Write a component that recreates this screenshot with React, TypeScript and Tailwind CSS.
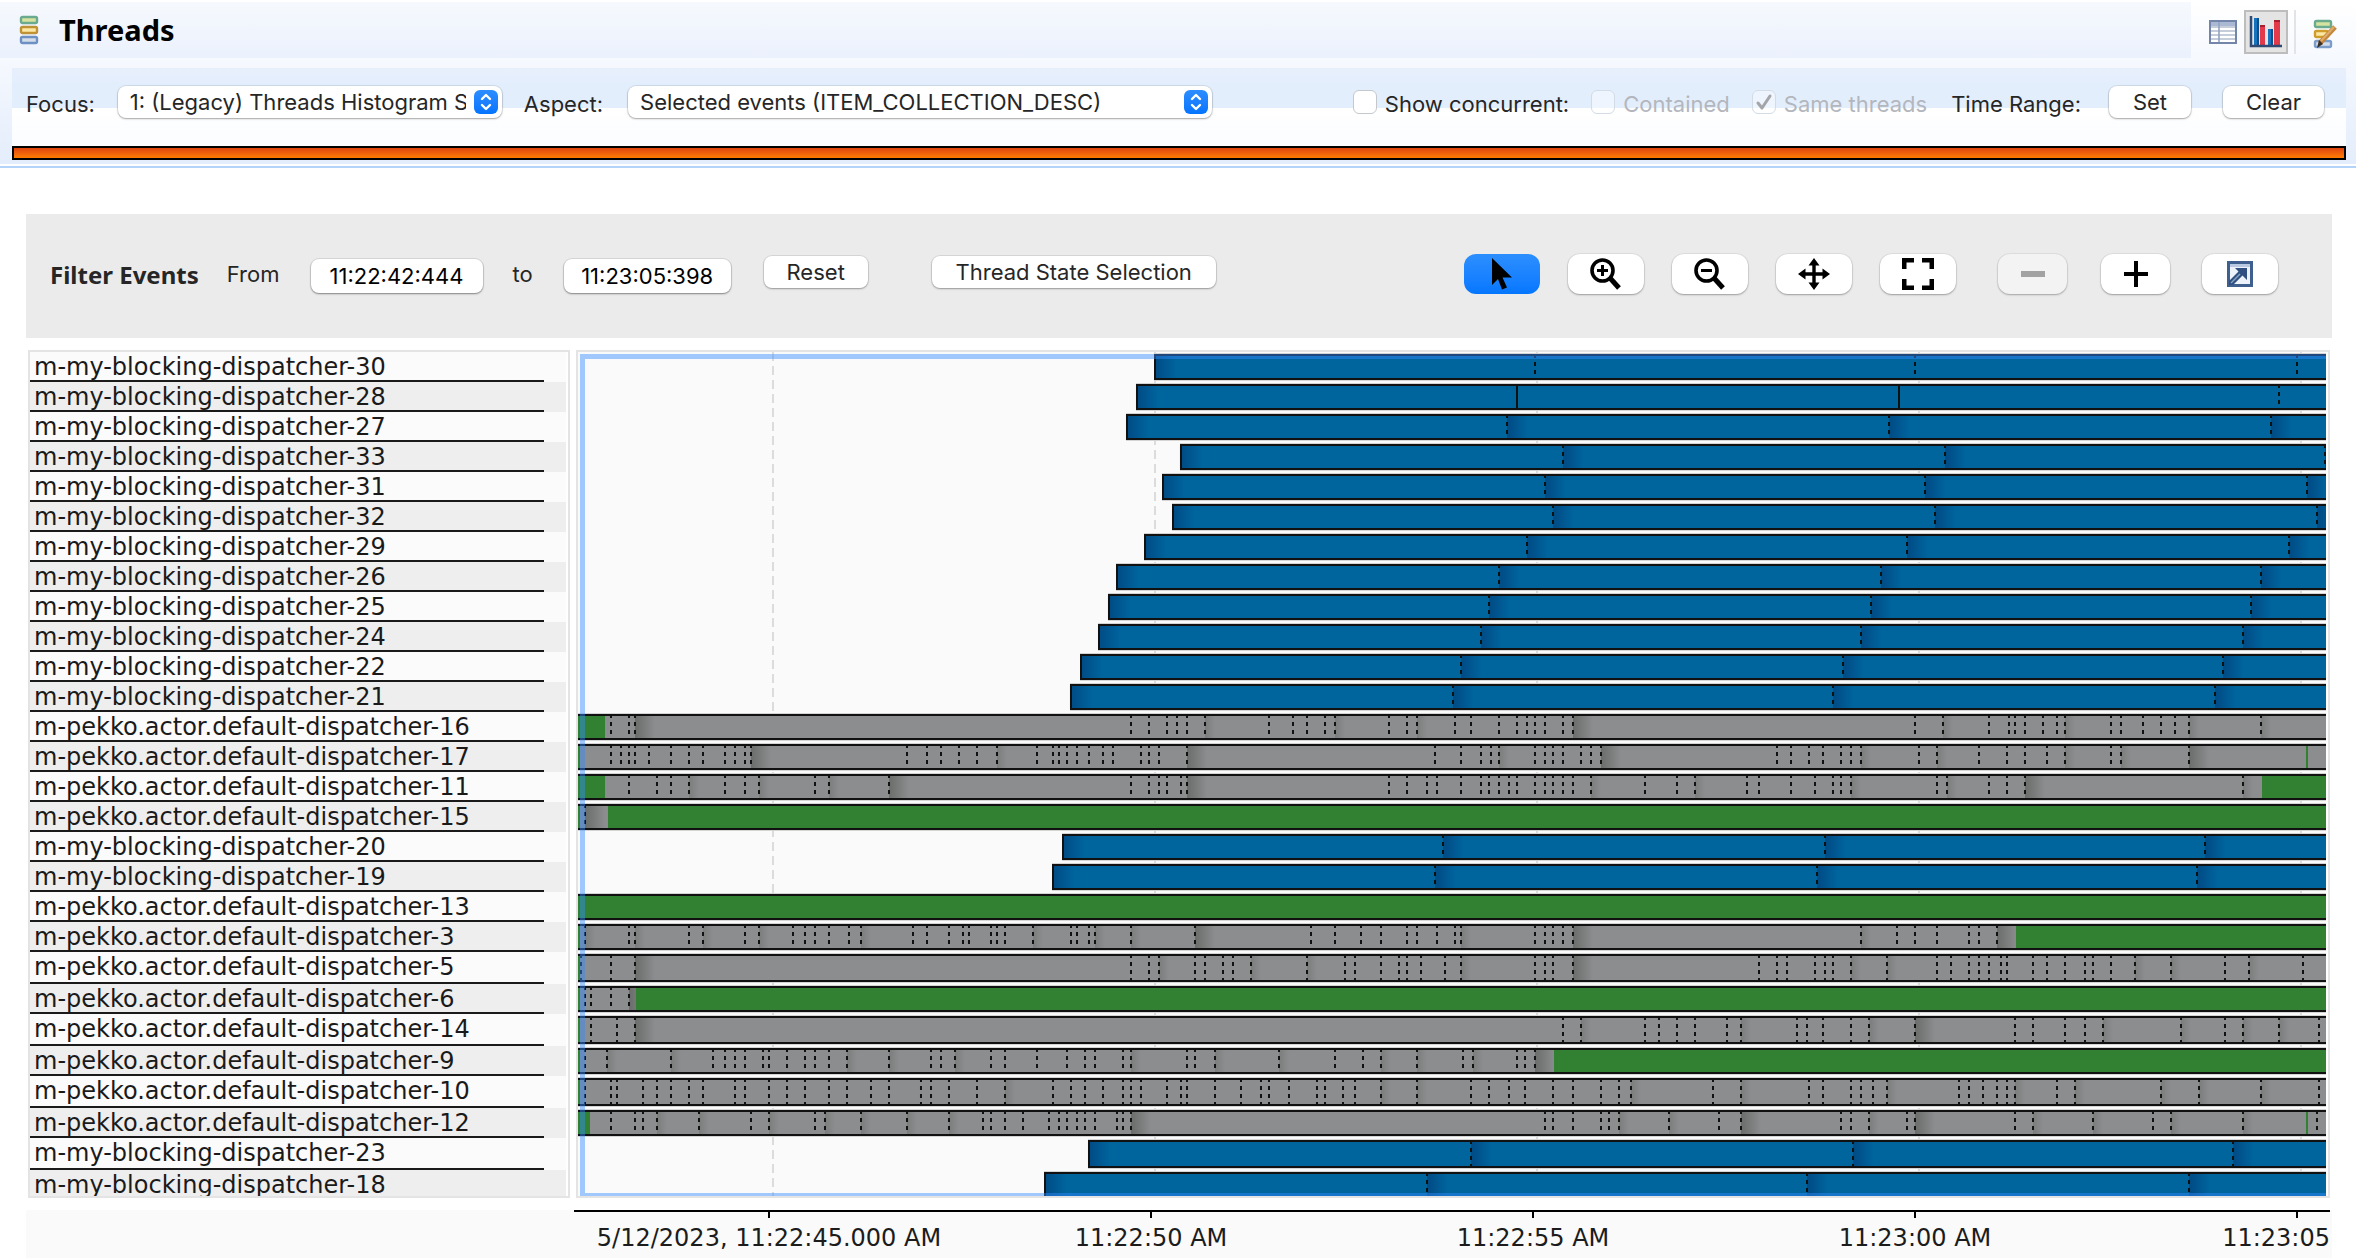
import React from "react";

type Kind = "blue" | "grey" | "green";

interface Thread {
  name: string;
  kind: Kind;
  start?: number;
  ticks?: number[];
  /** green stretches as [from, to] */
  green?: [number, number][];
  solidTicks?: boolean;
}

const SPAN = 1748;
const B = "m-my-blocking-dispatcher-";
const P = "m-pekko.actor.default-dispatcher-";

const THREADS: Thread[] = [
  { name: B + "30", kind: "blue", start: 576, ticks: [957, 1337, 1719] },
  { name: B + "28", kind: "blue", start: 558, ticks: [939, 1321, 1701], solidTicks: true },
  { name: B + "27", kind: "blue", start: 548, ticks: [929, 1311, 1693] },
  { name: B + "33", kind: "blue", start: 602, ticks: [985, 1367, 1747] },
  { name: B + "31", kind: "blue", start: 584, ticks: [967, 1347, 1729] },
  { name: B + "32", kind: "blue", start: 594, ticks: [975, 1357, 1739] },
  { name: B + "29", kind: "blue", start: 566, ticks: [949, 1329, 1711] },
  { name: B + "26", kind: "blue", start: 538, ticks: [921, 1303, 1683] },
  { name: B + "25", kind: "blue", start: 530, ticks: [911, 1293, 1673] },
  { name: B + "24", kind: "blue", start: 520, ticks: [903, 1283, 1665] },
  { name: B + "22", kind: "blue", start: 502, ticks: [883, 1265, 1645] },
  { name: B + "21", kind: "blue", start: 492, ticks: [875, 1255, 1637] },
  {
    name: P + "16",
    kind: "grey",
    green: [[0, 27]],
    ticks: [33, 51, 57, 553, 571, 589, 599, 609, 627, 691, 715, 729, 747, 757, 811, 829, 839, 877, 893, 921, 939, 949, 957, 967, 985, 995, 1337, 1365, 1411, 1431, 1437, 1447, 1465, 1479, 1487, 1533, 1543, 1565, 1583, 1597, 1611, 1683],
  },
  {
    name: P + "17",
    kind: "grey",
    green: [[0, 2], [1728, 1730]],
    ticks: [33, 43, 51, 57, 71, 93, 111, 125, 147, 157, 167, 173, 329, 349, 363, 381, 399, 419, 459, 475, 481, 489, 499, 511, 525, 535, 563, 571, 581, 609, 857, 883, 903, 913, 921, 957, 967, 975, 985, 1003, 1013, 1023, 1199, 1213, 1231, 1245, 1263, 1273, 1283, 1341, 1359, 1401, 1429, 1447, 1469, 1487, 1533, 1543, 1611],
  },
  {
    name: P + "11",
    kind: "grey",
    green: [[0, 27], [1684, 1748]],
    ticks: [51, 79, 93, 111, 147, 167, 181, 237, 251, 311, 553, 571, 581, 589, 603, 609, 811, 829, 849, 859, 883, 903, 911, 921, 931, 939, 957, 967, 975, 985, 995, 1013, 1067, 1099, 1117, 1169, 1181, 1213, 1237, 1255, 1263, 1273, 1359, 1369, 1411, 1429, 1447, 1665],
  },
  { name: P + "15", kind: "grey", green: [[0, 2], [30, 1748]], ticks: [7] },
  { name: B + "20", kind: "blue", start: 484, ticks: [865, 1247, 1627] },
  { name: B + "19", kind: "blue", start: 474, ticks: [857, 1239, 1619] },
  { name: P + "13", kind: "green" },
  {
    name: P + "3",
    kind: "grey",
    green: [[0, 2], [1438, 1748]],
    ticks: [7, 51, 57, 111, 125, 167, 181, 215, 227, 237, 251, 271, 283, 335, 349, 371, 385, 391, 413, 419, 427, 455, 493, 499, 511, 517, 553, 617, 733, 757, 783, 803, 829, 839, 859, 877, 883, 957, 967, 975, 985, 995, 1283, 1319, 1337, 1359, 1391, 1401, 1419],
  },
  {
    name: P + "5",
    kind: "grey",
    green: [[0, 2]],
    ticks: [3, 33, 57, 553, 571, 581, 617, 627, 645, 655, 673, 729, 767, 777, 803, 821, 829, 843, 867, 883, 957, 967, 975, 995, 1181, 1199, 1209, 1237, 1247, 1255, 1273, 1309, 1359, 1373, 1391, 1401, 1411, 1423, 1429, 1455, 1469, 1487, 1507, 1515, 1533, 1557, 1593, 1647, 1671, 1725],
  },
  { name: P + "6", kind: "grey", green: [[0, 2], [58, 1748]], ticks: [7, 13, 33, 51] },
  {
    name: P + "14",
    kind: "grey",
    green: [[0, 2]],
    ticks: [13, 39, 57, 985, 1003, 1067, 1081, 1099, 1117, 1149, 1163, 1219, 1229, 1245, 1273, 1291, 1337, 1437, 1455, 1487, 1507, 1525, 1603, 1647, 1665, 1701, 1741],
  },
  {
    name: P + "9",
    kind: "grey",
    green: [[0, 2], [976, 1748]],
    ticks: [7, 29, 93, 135, 147, 157, 167, 185, 191, 209, 227, 237, 251, 269, 311, 353, 363, 377, 413, 427, 459, 489, 507, 517, 545, 553, 609, 617, 637, 701, 757, 785, 803, 839, 885, 895, 939, 947, 957],
  },
  {
    name: P + "10",
    kind: "grey",
    green: [[0, 2]],
    ticks: [7, 33, 39, 65, 79, 93, 111, 125, 157, 167, 191, 209, 227, 251, 269, 293, 311, 343, 353, 371, 399, 427, 475, 493, 507, 525, 545, 553, 563, 589, 603, 609, 637, 663, 683, 691, 711, 739, 747, 765, 777, 803, 839, 893, 911, 931, 947, 975, 995, 1023, 1041, 1053, 1135, 1163, 1231, 1245, 1273, 1283, 1295, 1309, 1381, 1391, 1405, 1419, 1429, 1437, 1479, 1497, 1583, 1621, 1683, 1741],
  },
  {
    name: P + "12",
    kind: "grey",
    green: [[0, 12], [1728, 1730]],
    ticks: [33, 57, 65, 79, 121, 173, 191, 237, 247, 283, 329, 371, 405, 413, 427, 445, 471, 481, 489, 499, 507, 517, 539, 545, 553, 967, 975, 995, 1023, 1031, 1041, 1091, 1141, 1163, 1263, 1273, 1291, 1329, 1337, 1437, 1455, 1515, 1575, 1593, 1665, 1739],
  },
  { name: B + "23", kind: "blue", start: 510, ticks: [893, 1275, 1655] },
  { name: B + "18", kind: "blue", start: 466, ticks: [849, 1229, 1611] },
];

const TALL_ROWS = [20, 22, 24, 26, 27];
const rowHeight = (i: number) => (TALL_ROWS.includes(i) ? 32 : 30);
const ROW_TOPS = THREADS.map((_, i) =>
  THREADS.slice(0, i).reduce((sum, _t, j) => sum + rowHeight(j), 0)
);

const GRID_LINES = [195, 577, 959, 1341, 1723];
const FILL: Record<Kind, string> = { blue: "#00649d", grey: "#8c8d8f", green: "#328132" };
const pct = (v: number) => `${((v / SPAN) * 100).toFixed(3)}%`;

function Bar({ thread, index }: { thread: Thread; index: number }) {
  const y = ROW_TOPS[index] + 2;
  const h = rowHeight(index) - 4;
  const x = thread.start ?? 0;
  const ticks = thread.ticks ?? [];
  const isBlue = thread.kind === "blue";
  return (
    <g>
      <rect x={pct(x)} y={y - 1} width={pct(SPAN - x)} height={h + 2} fill="#d4d4d4" />
      <rect x={pct(x)} y={y} width={pct(SPAN - x)} height={h} fill="#111" />
      <rect x={pct(x)} y={y + 2} width={pct(SPAN - x)} height={h - 4} fill={FILL[thread.kind]} />
      {isBlue && <rect x={pct(x)} y={y + 2} width="22" height={h - 4} fill="url(#shade-blue)" />}
      {isBlue && <rect x={pct(x)} y={y} width="2" height={h} fill="#111" />}
      {isBlue &&
        index > 1 &&
        ticks.map((t) => (
          <rect key={t} x={pct(t)} y={y + 2} width="20" height={h - 4} fill="url(#shade-blue)" />
        ))}
      {thread.kind === "grey" &&
        ticks.map((t, k) => {
          const gap = (ticks[k + 1] ?? SPAN) - t;
          return gap >= 34 ? (
            <rect
              key={t}
              x={pct(t)}
              y={y + 2}
              width={gap > 90 ? 20 : 10}
              height={h - 4}
              fill="url(#shade-grey)"
              opacity={gap > 90 ? 1 : 0.5}
            />
          ) : null;
        })}
      {(thread.green ?? []).map(([a, b]) => (
        <rect key={a} x={pct(a)} y={y + 2} width={pct(b - a)} height={h - 4} fill={FILL.green} />
      ))}
      {ticks.map((t, k) => (
        <line
          key={t}
          x1={pct(t)}
          x2={pct(t)}
          y1={y}
          y2={y + h}
          stroke="#111"
          strokeWidth="2"
          strokeDasharray={thread.solidTicks && k < 2 ? undefined : "4 4"}
        />
      ))}
    </g>
  );
}

function ThreadChart() {
  return (
    <svg className="block h-[844px] w-full bg-[#fafafa]" role="img" aria-label="Thread timeline">
      <defs>
        <linearGradient id="shade-blue">
          <stop offset="0" stopColor="#004a84" />
          <stop offset="1" stopColor="#00649d" />
        </linearGradient>
        <linearGradient id="shade-grey">
          <stop offset="0" stopColor="#6a6d6a" />
          <stop offset="1" stopColor="#8c8d8f" />
        </linearGradient>
      </defs>
      {GRID_LINES.map((x) => (
        <line key={x} x1={pct(x)} x2={pct(x)} y1="0" y2="844" stroke="#dcdcdc" strokeWidth="2" strokeDasharray="9 5" />
      ))}
      {THREADS.map((t, i) => (
        <Bar key={t.name} thread={t} index={i} />
      ))}
      <g fill="#338cff" fillOpacity="0.45">
        <rect x="2" y="2" width="5" height="842" />
        <rect x="7" y="2" width="100%" height="5" />
        <rect x="7" y="841" width="100%" height="3" />
      </g>
    </svg>
  );
}

const AXIS_SPAN = 1756;
const AXIS: [number, string][] = [
  [195, "5/12/2023, 11:22:45.000 AM"],
  [577, "11:22:50 AM"],
  [959, "11:22:55 AM"],
  [1341, "11:23:00 AM"],
];

function TimeAxis() {
  const p = (v: number) => `${((v / AXIS_SPAN) * 100).toFixed(3)}%`;
  return (
    <svg className="block h-12 w-full" role="img" aria-label="Time axis">
      <rect width="100%" height="2" fill="#000" />
      {[...AXIS.map(([x]) => x), 1723].map((x) => (
        <line key={x} x1={p(x)} x2={p(x)} y1="2" y2="8" stroke="#000" strokeWidth="2" />
      ))}
      <g fontFamily="'DejaVu Sans', sans-serif" fontSize="24" fill="#1c1c1c">
        {AXIS.map(([x, label]) => (
          <text key={x} x={p(x)} y="36" textAnchor="middle">
            {label}
          </text>
        ))}
        <text x="100%" y="36" textAnchor="end">
          11:23:05
        </text>
      </g>
    </svg>
  );
}

function StackIcon() {
  return (
    <svg width="20" height="30" viewBox="0 0 20 30">
      <rect x="2" y="2" width="16" height="6" rx="1.5" fill="#d6e3a0" stroke="#6aab90" strokeWidth="2.4" />
      <rect x="2" y="12" width="16" height="6" rx="1.5" fill="#fbe8a4" stroke="#bf9235" strokeWidth="2.4" />
      <rect x="2" y="22" width="16" height="6" rx="1.5" fill="#d3deea" stroke="#6c91c2" strokeWidth="2.4" />
    </svg>
  );
}

function TableIcon() {
  return (
    <svg width="28" height="24" viewBox="0 0 28 24">
      <rect x="1" y="1" width="26" height="22" fill="#fff" stroke="#7385a8" strokeWidth="2" />
      <rect x="2" y="2" width="24" height="4" fill="#aab8d4" />
      <path d="M2 7h24M2 11h24M2 15h24M2 19h24" stroke="#b3bdd0" strokeWidth="1.6" />
      <path d="M10 2v20" stroke="#93a2c0" strokeWidth="1.6" />
    </svg>
  );
}

function ChartIcon() {
  return (
    <svg width="34" height="34" viewBox="0 0 34 34">
      <path d="M5 3h5v27H5zM19 14h5v16h-5z" fill="#1673bd" />
      <path d="M8 3h2v27H8zM22 14h2v16h-2z" fill="#0b4f8a" />
      <path d="M11 10h5v20h-5zM25 5h6v25h-6z" fill="#e2394b" />
      <path d="M11 10h5v2h-5zM25 5h6v2h-6z" fill="#a81f30" />
      <path d="M2 1v30h31" fill="none" stroke="#2f4a73" strokeWidth="2.5" />
    </svg>
  );
}

function StackPencilIcon() {
  return (
    <svg width="26" height="32" viewBox="0 0 26 32">
      <rect x="3" y="3" width="16" height="6" rx="1.5" fill="#d6e3a0" stroke="#6aab90" strokeWidth="2.4" />
      <rect x="3" y="13" width="13" height="6" rx="1.5" fill="#fbe8a4" stroke="#d09c2c" strokeWidth="2.4" />
      <rect x="3" y="23" width="16" height="6" rx="1.5" fill="#d3deea" stroke="#7c9dca" strokeWidth="2.4" />
      <path d="M23 9 8 25" stroke="#c4853d" strokeWidth="5" />
      <path d="M22 9 9 23" stroke="#e0ac68" strokeWidth="2" />
      <path d="m7 22 4 4-6 4z" fill="#3a2f26" />
    </svg>
  );
}

const CursorIcon = () => (
  <svg width="22" height="32" viewBox="0 0 22 32">
    <path d="M1 0v27l6-6 4 10.500 5-2-4.500-10H21z" fill="#000" />
  </svg>
);

const ZoomIcon = ({ plus }: { plus?: boolean }) => (
  <svg width="32" height="32" viewBox="0 0 32 32" fill="none" stroke="#000">
    <circle cx="12.500" cy="12.500" r="10.500" strokeWidth="3.600" />
    <path d="m20 20 9 10" strokeWidth="5" />
    <path d={plus ? "M7 12.500h11M12.500 7v11" : "M7 12.500h11"} strokeWidth="3" />
  </svg>
);

const MoveIcon = () => (
  <svg width="32" height="32" viewBox="0 0 32 32">
    <path d="M16 4v24M4 16h24" stroke="#000" strokeWidth="3.400" />
    <path d="m16 0 5.500 7.500h-11zM16 32l5.500-7.500h-11zM0 16l7.500-5.500v11zM32 16l-7.500-5.500v11z" fill="#000" />
  </svg>
);

const FitIcon = () => (
  <svg width="32" height="32" viewBox="0 0 32 32" fill="none" stroke="#000" strokeWidth="4.500">
    <path d="M2.250 11V2.250H12M20 2.250h9.750V11M29.750 21v8.750H20M12 29.750H2.250V21" />
  </svg>
);

const MinusIcon = () => (
  <svg width="24" height="28" viewBox="0 0 24 28">
    <path d="M0 14h24" stroke="#9b9b9b" strokeWidth="6" />
  </svg>
);

const PlusIcon = () => (
  <svg width="24" height="26" viewBox="0 0 24 26">
    <path d="M0 13h24M12 0v26" stroke="#000" strokeWidth="4" />
  </svg>
);

const ExportIcon = () => (
  <svg width="26" height="26" viewBox="0 0 26 26">
    <rect x="1.500" y="1.500" width="23" height="23" fill="#eef3fb" stroke="#3f5f8e" strokeWidth="3" />
    <path d="M3 4.500h20" stroke="#b9c9e2" strokeWidth="3" />
    <path d="M8 7h12v12l-4.500-4.500L6 24H2v-4l9.500-9.500z" fill="#2f5080" />
    <path d="m4 22 9-9" stroke="#8aa1c4" strokeWidth="1.500" />
  </svg>
);

function Select({ id, value, width }: { id: string; value: string; width: string }) {
  return (
    <div className={`relative h-8 shrink-0 ${width}`}>
      <select
        id={id}
        className="h-8 w-full appearance-none truncate rounded-lg bg-white pr-9 pl-3 text-[22px] leading-8 text-[#262626] [text-overflow:clip] shadow-[0_0_0_1px_rgba(0,0,0,0.08),0_1px_2px_rgba(0,0,0,0.3)]"
      >
        <option>{value}</option>
      </select>
      <span className="pointer-events-none absolute top-1 right-1 flex h-6 w-6 items-center justify-center rounded-md bg-gradient-to-b from-[#2c8dff] to-[#0374ff]">
        <svg width="12" height="18" viewBox="0 0 12 18" fill="none" stroke="#fff" strokeWidth="2.400" strokeLinecap="round" strokeLinejoin="round">
          <path d="m2 6 4-4 4 4M2 12l4 4 4-4" />
        </svg>
      </span>
    </div>
  );
}

const BTN =
  "shrink-0 rounded-lg bg-white text-[22px] leading-8 text-[#262626] shadow-[0_0_0_1px_rgba(0,0,0,0.08),0_1px_2px_rgba(0,0,0,0.3)]";
const ICON_BTN =
  "flex h-10 shrink-0 items-center justify-center rounded-xl shadow-[0_0_0_1px_rgba(0,0,0,0.05),0_1px_2px_rgba(0,0,0,0.3)]";
const FIELD =
  "h-[34px] shrink-0 rounded-lg bg-white text-center text-[22px] text-black shadow-[0_0_0_1px_rgba(0,0,0,0.08),0_1px_2px_rgba(0,0,0,0.4)]";

function Check({ id, label, checked, disabled }: { id: string; label: string; checked?: boolean; disabled?: boolean }) {
  return (
    <div className="flex shrink-0 items-center gap-2">
      <div className="relative h-6 w-6">
        <input
          id={id}
          type="checkbox"
          defaultChecked={checked}
          disabled={disabled}
          className="block h-6 w-6 appearance-none rounded-md border border-[#c4c8cd] bg-white disabled:border-[#d3dbe6] disabled:bg-white/40"
        />
        {checked && (
          <svg className="pointer-events-none absolute inset-0" width="24" height="24" viewBox="0 0 24 24" fill="none" stroke="#a3a5a8" strokeWidth="3" strokeLinecap="round" strokeLinejoin="round">
            <path d="m6 13 4 5 8-12" />
          </svg>
        )}
      </div>
      <label htmlFor={id} className={disabled ? "pt-1 text-[#b3b7bd]" : "pt-1 text-[#262626]"}>
        {label}
      </label>
    </div>
  );
}

export default function App() {
  return (
    <div className="flex min-h-screen flex-col overflow-hidden bg-white pt-0.5 font-['Inter',sans-serif] text-[22px] leading-7 text-[#262626]">
      <header className="border-b-2 border-[#b3d3f8]">
        <div className="flex h-14 items-stretch">
          <div className="flex flex-1 items-center gap-5 bg-gradient-to-b from-[#f6f9fd] to-[#ebf1fd] pl-[19px]">
            <StackIcon />
            <h1 className="font-['Noto_Sans',sans-serif] text-[29px] leading-8 font-bold text-black">Threads</h1>
          </div>
          <div className="flex items-center bg-gradient-to-b from-white to-[#f6f9fe] pr-[18px] pl-[18px]">
            <button aria-label="Table view" className="mt-1 mr-[7px]">
              <TableIcon />
            </button>
            <button aria-label="Chart view" className="mt-2 mb-1 flex h-11 w-11 items-center justify-center self-center border-2 border-[#bdbdbd] bg-[#e4e4e4]">
              <ChartIcon />
            </button>
            <div className="mt-1 mr-4 ml-1.5 h-11 w-0.5 bg-[#e2e4e8]" />
            <button aria-label="Edit thread lanes" className="mt-2">
              <StackPencilIcon />
            </button>
          </div>
        </div>

        <div className="border-b-2 border-white bg-gradient-to-b from-[#f6f9fe] to-[#e4edfc] px-2.5 pt-2.5 pb-1 pl-3">
          <div className="flex h-[78px] items-start bg-[linear-gradient(to_bottom,#e8effc_0px,#e3eefd_16px,#e3eefd_40px,#ffffff_40px,#fafcff_78px)] pt-[18px] pr-[22px] pl-3.5">
            <label htmlFor="focus" className="mr-[23px] pt-1">
              Focus:
            </label>
            <Select id="focus" value="1: (Legacy) Threads Histogram Selection" width="w-96" />
            <label htmlFor="aspect" className="mr-[25px] ml-[22px] pt-1">
              Aspect:
            </label>
            <Select id="aspect" value="Selected events (ITEM_COLLECTION_DESC)" width="w-[584px]" />
            <div className="ml-auto flex h-8 items-center">
              <Check id="concurrent" label="Show concurrent:" />
              <div className="w-[22px]" />
              <Check id="contained" label="Contained" disabled />
              <div className="w-[22px]" />
              <Check id="same" label="Same threads" checked disabled />
              <span className="mr-7 ml-6 pt-1">Time Range:</span>
              <button className={`${BTN} mr-8 h-8 w-[82px]`}>Set</button>
              <button className={`${BTN} h-8 w-[101px]`}>Clear</button>
            </div>
          </div>
          <div className="h-3.5 border-2 border-black bg-gradient-to-b from-[#df4410] to-[#ff7c00]" />
        </div>
      </header>

      <main className="mt-[46px] mr-6 ml-[26px] flex flex-1 flex-col">
        <section className="flex h-[124px] items-start bg-[#ebebeb] pr-[54px] pl-6">
          <h2 className="mr-7 pt-[47px] font-['Noto_Sans',sans-serif] text-2xl leading-7 font-bold">Filter Events</h2>
          <label htmlFor="from" className="mr-[31px] pt-[46px]">
            From
          </label>
          <input id="from" className={`${FIELD} mt-[45px] w-[172px]`} defaultValue="11:22:42:444" />
          <label htmlFor="to" className="mr-[31px] ml-[30px] pt-[46px]">
            to
          </label>
          <input id="to" className={`${FIELD} mt-[45px] w-[167px]`} defaultValue="11:23:05:398" />
          <button className={`${BTN} mt-[42px] ml-[33px] h-8 w-[104px]`}>Reset</button>
          <button className={`${BTN} mt-[42px] ml-16 h-8 w-[284px]`}>Thread State Selection</button>
          <div className="mt-10 ml-auto flex gap-7">
            <button aria-label="Select" className="flex h-10 w-[76px] items-center justify-center rounded-xl bg-gradient-to-b from-[#2c8fff] to-[#0477ff]">
              <CursorIcon />
            </button>
            <button aria-label="Zoom in" className={`${ICON_BTN} w-[76px] bg-white`}>
              <ZoomIcon plus />
            </button>
            <button aria-label="Zoom out" className={`${ICON_BTN} w-[76px] bg-white`}>
              <ZoomIcon />
            </button>
            <button aria-label="Pan" className={`${ICON_BTN} w-[76px] bg-white`}>
              <MoveIcon />
            </button>
            <button aria-label="Fit" className={`${ICON_BTN} mr-3.5 w-[76px] bg-white`}>
              <FitIcon />
            </button>
            <button aria-label="Decrease" disabled className={`${ICON_BTN} mr-1.5 w-[69px] bg-[#f4f4f4] opacity-90`}>
              <MinusIcon />
            </button>
            <button aria-label="Increase" className={`${ICON_BTN} mr-1 w-[69px] bg-white`}>
              <PlusIcon />
            </button>
            <button aria-label="Open in window" className={`${ICON_BTN} w-[76px] bg-white`}>
              <ExportIcon />
            </button>
          </div>
        </section>

        <section className="mt-3 mr-0.5 ml-0.5 flex gap-1.5">
          <ul className="h-[848px] w-[542px] shrink-0 overflow-hidden border-2 border-[#e4e4e4] pr-0.5 font-['DejaVu_Sans',sans-serif] text-2xl text-[#1a1a1a]">
            {THREADS.map((t, i) => (
              <li
                key={t.name}
                className={`${i % 2 ? "bg-[#eeeeee]" : "bg-[#fbfbfb]"} ${rowHeight(i) === 32 ? "h-8 pr-[22px]" : "h-[30px] pr-[22px]"}`}
              >
                <div className="h-full border-b-2 border-[#1a1a1a] pl-1 leading-[30px] whitespace-nowrap">{t.name}</div>
              </li>
            ))}
          </ul>
          <div className="h-[848px] min-w-0 flex-1 border-2 border-[#e4e4e4] pr-0.5">
            <ThreadChart />
          </div>
        </section>

        <section className="mt-3 h-12 bg-[#fafafa] pr-0.5 pl-[548px]">
          <TimeAxis />
        </section>
      </main>
    </div>
  );
}
